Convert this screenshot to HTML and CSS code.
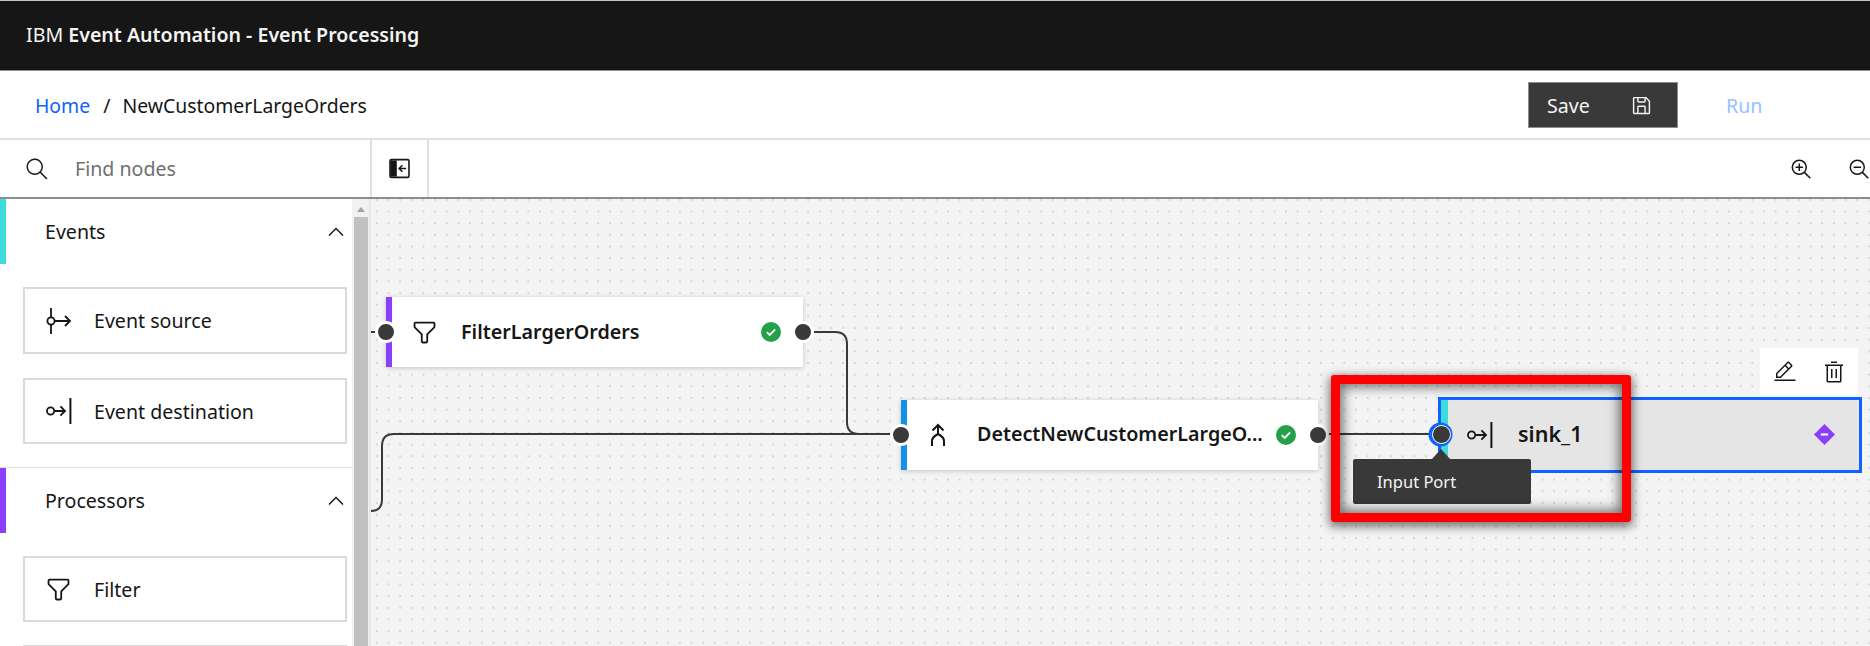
FILE: index.html
```html
<!DOCTYPE html>
<html lang="en">
<head>
<meta charset="utf-8">
<title>IBM Event Automation - Event Processing</title>
<link rel="stylesheet" href="styles.css">
</head>
<body>
<svg class="defs" width="0" height="0" aria-hidden="true">
  <symbol id="i-filter" viewBox="0 0 32 32"><path d="M18,28H14a2,2,0,0,1-2-2V18.41L4.59,11A2,2,0,0,1,4,9.59V6A2,2,0,0,1,6,4H26a2,2,0,0,1,2,2V9.59A2,2,0,0,1,27.41,11L20,18.41V26A2,2,0,0,1,18,28ZM6,6V9.59l8,8V26h4V17.59l8-8V6Z"/></symbol>
  <symbol id="i-source" viewBox="0 0 26 26"><g fill="none" stroke="currentColor" stroke-width="1.8"><path d="M5 0V9M5 17V26"/><circle cx="5" cy="13" r="3.6"/><path d="M8.6 13H24M19 8l5 5-5 5"/></g></symbol>
  <symbol id="i-dest" viewBox="0 0 26 26"><g fill="none" stroke="currentColor" stroke-width="1.8"><circle cx="4.6" cy="13" r="3.6"/><path d="M8.2 13H19M14.4 8.4 19 13l-4.6 4.6"/><path d="M24.4 0V26" stroke-width="2"/></g></symbol>
  <symbol id="i-chev" viewBox="0 0 16 16"><path d="M8 5 13 10 12.3 10.7 8 6.4 3.7 10.7 3 10Z"/></symbol>
  <symbol id="i-check" viewBox="0 0 20 20"><circle cx="10" cy="10" r="10" fill="#24a148"/><path d="M5.8 10.2 8.7 13l5.5-5.6" fill="none" stroke="#fff" stroke-width="1.8"/></symbol>
</svg>

<header class="topbar"><span class="brand">IBM <b>Event Automation - Event Processing</b></span></header>

<nav class="crumbbar">
  <div class="crumbs"><a class="crumb-link" href="#">Home</a><span class="crumb-sep">/</span><span>NewCustomerLargeOrders</span></div>
  <div class="actions">
    <button class="btn-save"><span>Save</span>
      <svg class="ico-save" viewBox="0 0 32 32"><path d="M27.71,9.29l-5-5A1,1,0,0,0,22,4H6A2,2,0,0,0,4,6V26a2,2,0,0,0,2,2H26a2,2,0,0,0,2-2V10A1,1,0,0,0,27.71,9.29ZM12,6h8v4H12Zm8,20H12V18h8Zm2,0V18a2,2,0,0,0-2-2H12a2,2,0,0,0-2,2v8H6V6h4v4a2,2,0,0,0,2,2h8a2,2,0,0,0,2-2V6.41l4,4V26Z"/></svg>
    </button>
    <button class="btn-run">Run</button>
  </div>
</nav>

<div class="toolbar">
  <div class="search">
    <svg class="ico-search" viewBox="0 0 16 16"><path d="M15,14.3 10.7,10c1.9-2.3,1.6-5.8-.7-7.7S4.2.7,2.3,3,.7,8.8,3,10.7c2,1.7,5,1.7,7,0l4.3,4.3ZM2,6.5C2,4,4,2,6.5,2S11,4,11,6.5,9,11,6.5,11,2,9,2,6.5Z"/></svg>
    <span class="search-ph">Find nodes</span>
  </div>
  <button class="collapse">
    <svg class="ico21" viewBox="0 0 21 21"><rect x="1" y="1.6" width="19" height="17.8" rx="1.5" fill="#fff" stroke="#161616" stroke-width="1.6"/><path d="M1.5 2.4h6.3v16.2H1.5z" fill="#161616"/><path d="M17.2 10.5H10.6M13.4 7.2l-3.3 3.3 3.3 3.3" fill="none" stroke="#161616" stroke-width="1.6"/></svg>
  </button>
  <div class="zooms">
    <svg class="ico-zoom" viewBox="0 0 20 20"><g fill="none" stroke="#161616" stroke-width="1.5"><circle cx="8.300" cy="8.300" r="7"/><path d="M13.400 13.400 19.300 19.300M8.300 4.600v7.400M4.600 8.300h7.400"/></g></svg>
    <svg class="ico-zoom" viewBox="0 0 20 20"><g fill="none" stroke="#161616" stroke-width="1.5"><circle cx="8.300" cy="8.300" r="7"/><path d="M13.400 13.400 19.300 19.300M4.600 8.300h7.400"/></g></svg>
  </div>
</div>

<main class="workspace">
  <aside class="palette">
    <div class="palette-list">
      <section class="group group-events">
        <div class="group-head"><span>Events</span><svg class="ico-chev"><use href="#i-chev"/></svg></div>
        <div class="group-body">
          <div class="tile tile-tall"><svg class="tile-ico"><use href="#i-source"/></svg><span>Event source</span></div>
          <div class="tile"><svg class="tile-ico"><use href="#i-dest"/></svg><span>Event destination</span></div>
        </div>
      </section>
      <section class="group group-proc">
        <div class="group-head"><span>Processors</span><svg class="ico-chev"><use href="#i-chev"/></svg></div>
        <div class="group-body">
          <div class="tile"><svg class="tile-funnel"><use href="#i-filter"/></svg><span>Filter</span></div>
          <div class="tile"></div>
        </div>
      </section>
    </div>
    <div class="scrollbar"><span class="scroll-up"></span><span class="scroll-thumb"></span></div>
  </aside>

  <section class="canvas">
    <svg class="wires" width="1499" height="447" viewBox="0 0 1499 447">
      <path d="M0 133H8"/>
      <path d="M441 133H464Q476 133 476 145V223Q476 235 488 235H530"/>
      <path d="M0 312Q11 312 11 300V247Q11 235 23 235H530"/>
      <path d="M947 235H1070"/>
    </svg>

    <div class="node node-filter">
      <svg class="node-funnel"><use href="#i-filter"/></svg>
      <span class="node-name">FilterLargerOrders</span>
      <svg class="status"><use href="#i-check"/></svg>
      <span class="port port-in"></span><span class="port port-out"></span>
    </div>

    <div class="node node-detect">
      <svg class="node-merge" viewBox="0 0 24 24"><g fill="none" stroke="#161616" stroke-width="2"><path d="M12 2V11M6.500 7.500 12 2l5.500 5.500M6 23V18Q6 14 12 11 18 14 18 18V23"/></g></svg>
      <span class="node-name name-up">DetectNewCustomerLargeO...</span>
      <svg class="status"><use href="#i-check"/></svg>
      <span class="port port-in"></span><span class="port port-out"></span>
    </div>

    <div class="node-tools">
      <svg class="ico-tool" viewBox="0 0 32 32"><path d="M2 26H30V28H2ZM25.400 9c.8-.8.8-2 0-2.800L21.800 2.600c-.8-.8-2-.8-2.800 0L4 17.600V24h6.400ZM20.400 4 24 7.600l-3 3L17.400 7ZM6 22V18.400l10-10L19.600 12l-10 10Z"/></svg>
      <svg class="ico-tool" viewBox="0 0 32 32"><path d="M12 12H14V24H12ZM18 12H20V24H18Z"/><path d="M4 6V8H6V28a2 2 0 0 0 2 2H24a2 2 0 0 0 2-2V8h2V6ZM8 28V8H24V28Z"/><path d="M12 2H20V4H12Z"/></svg>
    </div>

    <div class="node node-sink">
      <svg class="node-dest"><use href="#i-dest"/></svg>
      <span class="node-name name-up sink-name">sink_1</span>
      <svg class="diamond" viewBox="0 0 20 20"><path d="M10 0 20 10 10 20 0 10Z" fill="#8a3ffc"/><path d="M6.500 9h7v2h-7z" fill="#fff"/></svg>
      <span class="port port-active"></span>
    </div>

    <div class="tooltip"><span class="tooltip-caret"></span>Input Port</div>
    <div class="callout"></div>
  </section>
</main>
</body>
</html>
```
FILE: styles.css
```css
* { box-sizing: border-box; }
html, body { margin: 0; height: 646px; overflow: hidden; }
body { font-family: "Noto Sans", "Open Sans", sans-serif; color: #161616; background: #fff; font-size: 19.6px; }
.defs { position: absolute; }
button { font: inherit; border: 0; background: none; padding: 0; }
svg { display: block; fill: currentColor; flex: none; }

.ico21 { width: 21px; height: 21px; }
.ico-chev { width: 24px; height: 24px; }
.ico-save { width: 23px; height: 23px; fill: #f4f4f4; }
.ico-search { width: 24px; height: 24px; }
.ico-zoom { width: 20px; height: 20px; }
.ico-tool { width: 24px; height: 24px; }

.topbar { height: 71px; background: #161616; border-top: 1px solid #c6c6c6; border-bottom: 1px solid #8d8d8d; display: flex; align-items: center; padding: 0 0 2px 26px; color: #f4f4f4; }
.brand b { font-weight: 600; }

.crumbbar { height: 69px; border-bottom: 2px solid #e0e0e0; display: flex; align-items: center; justify-content: space-between; padding: 1px 0 0 35px; }
.crumbs { display: flex; align-items: center; font-size: 19.400px; }
.crumb-link { color: #0f62fe; text-decoration: none; }
.crumb-sep { margin: 0 12px 0 13px; }
.actions { display: flex; align-items: center; }
.btn-save { width: 150px; height: 46px; background: #393939; border: 1px solid #8d8d8d; color: #f4f4f4; display: flex; align-items: center; justify-content: space-between; padding: 0 24px 0 18px; }
.btn-run { width: 192px; text-align: left; padding-left: 48px; color: #97c1ff; }

.toolbar { height: 59px; border-bottom: 2px solid #8d8d8d; display: flex; align-items: stretch; }
.search { width: 372px; border-right: 2px solid #e0e0e0; display: flex; align-items: center; gap: 26px; padding-left: 25px; }
.search-ph { color: #6f6f6f; }
.collapse { width: 57px; border-right: 2px solid #e0e0e0; display: flex; align-items: center; justify-content: center; }
.zooms { margin-left: auto; display: flex; align-items: center; gap: 38px; padding-right: 1px; }

.workspace { display: flex; height: 448px; }
.palette { width: 371px; display: flex; flex: none; border-right: 2px solid #e8e8e8; overflow: hidden; }
.palette-list { width: 352px; flex: none; }
.group-head { height: 65px; display: flex; align-items: center; justify-content: space-between; padding: 0 4px 0 39px; border-left: 6px solid; margin-bottom: 23px; }
.group-events .group-head { border-color: #3ddbd9; }
.group-proc { border-top: 1px solid #e0e0e0; }
.group-proc .group-head { border-color: #8a3ffc; }
.group-body { padding: 0 5px 23px 23px; display: flex; flex-direction: column; gap: 24px; }
.group-proc .group-body { gap: 23px; }
.tile { height: 66px; border: 2px solid #dadada; display: flex; align-items: center; gap: 22px; padding-left: 21px; }
.tile-tall { height: 67px; }
.tile-ico { width: 26px; height: 26px; }
.tile-funnel { width: 29px; height: 29px; margin: 0 -1px 0 -2px; fill: #161616; }

.scrollbar { width: 17px; background: #f1f1f1; display: flex; flex-direction: column; align-items: center; flex: none; }
.scroll-up { margin: 8px 0 5px; border: 4px solid transparent; border-top: 0; border-bottom: 5px solid #a3a3a3; width: 0; }
.scroll-thumb { width: 14px; flex: 1; background: #c1c1c1; }

.canvas { position: relative; flex: 1; overflow: hidden; background-color: #f4f4f4; background-image: radial-gradient(circle, #d6d6d6 1px, transparent 1.4px); background-size: 11.67px 11.67px; background-position: 0 -5px; }
.wires { position: absolute; left: 0; top: 0; fill: none; stroke: #393939; stroke-width: 2; }

.node { position: absolute; height: 70px; width: 417px; background: #fff; display: flex; align-items: center; box-shadow: 0 1px 5px rgba(0,0,0,.2); font-weight: 600; border-left: 6px solid; }
.node-filter { left: 15px; top: 98px; border-color: #8a3ffc; }
.node-detect { left: 530px; top: 201px; border-color: #1192e8; }
.node-funnel { width: 29px; height: 29px; margin: 0 22px 0 18px; fill: #161616; }
.node-merge { width: 24px; height: 24px; margin: 0 27px 0 19px; }
.node-dest { width: 26px; height: 26px; margin: 0 25px 0 26px; }
.node-name { font-size: 19.700px; white-space: nowrap; position: relative; top: -1px; }
.name-up { top: -2px; }
.sink-name { font-size: 21.500px; }
.status { position: absolute; width: 20px; height: 20px; right: 22px; top: 25px; }
.port { position: absolute; width: 22px; height: 22px; border-radius: 50%; background: #393939; border: 3px solid #fff; }
.port-in { left: -17px; top: 24px; }
.port-out { right: -11px; top: 24px; }

.node-tools { position: absolute; left: 1389px; top: 149px; width: 98px; height: 47px; background: #fff; display: flex; align-items: center; justify-content: center; gap: 25px; }

.node-sink { left: 1067px; top: 198px; width: 424px; height: 76px; background: #e5e5e5; border: 3px solid #0f62fe; box-shadow: none; }
.node-sink::before { content: ""; position: absolute; left: 0; top: 0; bottom: 0; width: 7px; background: #3ddbd9; }
.diamond { position: absolute; width: 21px; height: 21px; right: 24px; top: 24px; }
.port-active { width: 19px; height: 19px; border-width: 1px; box-shadow: -1px 0 0 2.500px #0f62fe; left: -9.500px; top: 24.500px; }

.tooltip { position: absolute; left: 982px; top: 260px; width: 178px; height: 45px; background: #393939; color: #f4f4f4; border-radius: 2px; font-size: 16.500px; display: flex; align-items: center; padding-left: 24px; }
.tooltip-caret { position: absolute; left: 79px; top: -10px; border: 9px solid transparent; border-top: 0; border-bottom: 10px solid #393939; }

.callout { position: absolute; left: 960px; top: 176px; width: 300px; height: 147px; border: 9px solid #ff0000; border-radius: 3px; box-shadow: 0 3px 10px 2px rgba(0,0,0,.5), inset 0 0 12px 3px rgba(0,0,0,.55); }
```
